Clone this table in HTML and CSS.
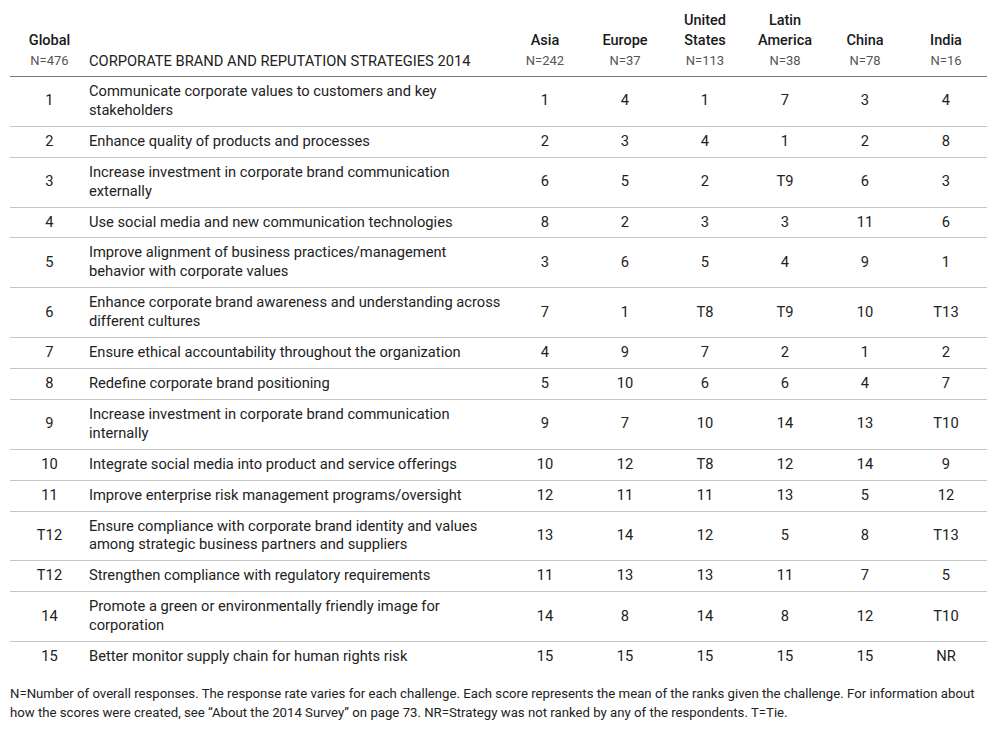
FILE: index.html
```html
<!DOCTYPE html>
<html>
<head>
<meta charset="utf-8">
<link rel="stylesheet" href="styles.css">
</head>
<body>
<div class="page">
<table class="ranks">
<colgroup>
<col class="c-global"><col class="c-text"><col class="c-num"><col class="c-num"><col class="c-num"><col class="c-num"><col class="c-num"><col class="c-last">
</colgroup>
<thead>
<tr>
<th class="num"><span class="region">Global</span><span class="n">N=476</span></th>
<th class="title"><span class="heading">CORPORATE BRAND AND REPUTATION STRATEGIES 2014</span></th>
<th class="num"><span class="region">Asia</span><span class="n">N=242</span></th>
<th class="num"><span class="region">Europe</span><span class="n">N=37</span></th>
<th class="num"><span class="region">United<br>States</span><span class="n">N=113</span></th>
<th class="num"><span class="region">Latin<br>America</span><span class="n">N=38</span></th>
<th class="num"><span class="region">China</span><span class="n">N=78</span></th>
<th class="num"><span class="region">India</span><span class="n">N=16</span></th>
</tr>
</thead>
<tbody>
<tr><td class="num">1</td><td>Communicate corporate values to customers and key<br>stakeholders</td><td class="num">1</td><td class="num">4</td><td class="num">1</td><td class="num">7</td><td class="num">3</td><td class="num">4</td></tr>
<tr><td class="num">2</td><td>Enhance quality of products and processes</td><td class="num">2</td><td class="num">3</td><td class="num">4</td><td class="num">1</td><td class="num">2</td><td class="num">8</td></tr>
<tr><td class="num">3</td><td>Increase investment in corporate brand communication<br>externally</td><td class="num">6</td><td class="num">5</td><td class="num">2</td><td class="num">T9</td><td class="num">6</td><td class="num">3</td></tr>
<tr><td class="num">4</td><td>Use social media and new communication technologies</td><td class="num">8</td><td class="num">2</td><td class="num">3</td><td class="num">3</td><td class="num">11</td><td class="num">6</td></tr>
<tr><td class="num">5</td><td>Improve alignment of business practices/management<br>behavior with corporate values</td><td class="num">3</td><td class="num">6</td><td class="num">5</td><td class="num">4</td><td class="num">9</td><td class="num">1</td></tr>
<tr><td class="num">6</td><td>Enhance corporate brand awareness and understanding across<br>different cultures</td><td class="num">7</td><td class="num">1</td><td class="num">T8</td><td class="num">T9</td><td class="num">10</td><td class="num">T13</td></tr>
<tr><td class="num">7</td><td>Ensure ethical accountability throughout the organization</td><td class="num">4</td><td class="num">9</td><td class="num">7</td><td class="num">2</td><td class="num">1</td><td class="num">2</td></tr>
<tr><td class="num">8</td><td>Redefine corporate brand positioning</td><td class="num">5</td><td class="num">10</td><td class="num">6</td><td class="num">6</td><td class="num">4</td><td class="num">7</td></tr>
<tr><td class="num">9</td><td>Increase investment in corporate brand communication<br>internally</td><td class="num">9</td><td class="num">7</td><td class="num">10</td><td class="num">14</td><td class="num">13</td><td class="num">T10</td></tr>
<tr><td class="num">10</td><td>Integrate social media into product and service offerings</td><td class="num">10</td><td class="num">12</td><td class="num">T8</td><td class="num">12</td><td class="num">14</td><td class="num">9</td></tr>
<tr><td class="num">11</td><td>Improve enterprise risk management programs/oversight</td><td class="num">12</td><td class="num">11</td><td class="num">11</td><td class="num">13</td><td class="num">5</td><td class="num">12</td></tr>
<tr><td class="num">T12</td><td>Ensure compliance with corporate brand identity and values<br>among strategic business partners and suppliers</td><td class="num">13</td><td class="num">14</td><td class="num">12</td><td class="num">5</td><td class="num">8</td><td class="num">T13</td></tr>
<tr><td class="num">T12</td><td>Strengthen compliance with regulatory requirements</td><td class="num">11</td><td class="num">13</td><td class="num">13</td><td class="num">11</td><td class="num">7</td><td class="num">5</td></tr>
<tr><td class="num">14</td><td>Promote a green or environmentally friendly image for<br>corporation</td><td class="num">14</td><td class="num">8</td><td class="num">14</td><td class="num">8</td><td class="num">12</td><td class="num">T10</td></tr>
<tr><td class="num">15</td><td>Better monitor supply chain for human rights risk</td><td class="num">15</td><td class="num">15</td><td class="num">15</td><td class="num">15</td><td class="num">15</td><td class="num">NR</td></tr>
</tbody>
</table>
<p class="note">N=Number of overall responses. The response rate varies for each challenge. Each score represents the mean of the ranks given the challenge. For information about<br>how the scores were created, see “About the 2014 Survey” on page 73. NR=Strategy was not ranked by any of the respondents. T=Tie.</p>
</div>
</body>
</html>
```
FILE: styles.css
```css
html, body {
  margin: 0;
  padding: 0;
  background: #ffffff;
}
body {
  font-family: Roboto, "Liberation Sans", sans-serif;
  color: #222222;
}
.page {
  padding: 11px 9px 0 10px;
}
.ranks {
  width: 977px;
  border-collapse: collapse;
  table-layout: fixed;
  font-size: 14.7px;
  line-height: 18.9px;
}
.c-global { width: 79px; }
.c-text { width: 416px; }
.c-num { width: 80px; }
.c-last { width: 82px; }
.ranks th {
  font-weight: normal;
  vertical-align: bottom;
  padding: 0 0 5px 0;
  border-bottom: 1px solid #777777;
}
.ranks th.num { text-align: center; }
.ranks th.title { text-align: left; }
.region {
  display: block;
  font-weight: 500;
  font-size: 14.5px;
  line-height: 20px;
  color: #1a1a1a;
}
.n {
  display: block;
  font-size: 13px;
  line-height: 20px;
  color: #555555;
}
.heading {
  display: block;
  font-size: 14.7px;
  line-height: 20px;
  color: #222222;
}
.ranks td {
  padding: 5px 0 6px 0;
  border-bottom: 1px solid #c4c4c4;
  vertical-align: middle;
}
.ranks tbody tr:last-child td { border-bottom: none; }
.ranks td.num { text-align: center; }
.note {
  margin: 12px 0 0 0;
  font-size: 13.2px;
  line-height: 19px;
  color: #222222;
}
```
